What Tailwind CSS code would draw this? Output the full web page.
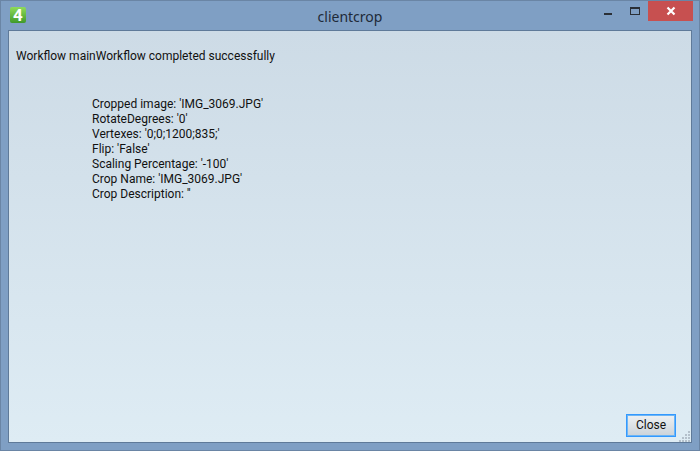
<!DOCTYPE html>
<html>
<head>
  <title>clientcrop</title>
  <script src="https://cdn.jsdelivr.net/npm/@tailwindcss/browser@4"></script>
</head>
<body class="w-[700px] h-[451px] overflow-hidden font-['Roboto',sans-serif]">
  <div class="w-full h-full flex flex-col bg-[#7f9fc4] border border-[#6a85a5]">
    <!-- title bar -->
    <div class="h-[29px] flex shrink-0 relative">
      <div class="w-[16px] h-[16px] ml-[9px] mt-[6px] rounded-[2px] bg-gradient-to-b from-[#8fdc5a] to-[#3f9a2a] flex items-center justify-center">
        <span class="text-white text-[17px] leading-none font-bold">4</span>
      </div>
      <div class="absolute inset-x-0 top-[6px] text-center font-['Noto_Sans',sans-serif] text-[14px] leading-[20px] text-[#1e2a38]">clientcrop</div>
      <div class="ml-auto flex items-start mr-[6px]">
        <div class="w-[27px] h-[20px] flex items-center justify-center">
          <div class="w-[8px] h-[2px] mt-[6px] bg-[#2a2f36]"></div>
        </div>
        <div class="w-[27px] h-[20px] flex items-center justify-center">
          <div class="w-[10px] h-[8px] border border-t-2 border-[#2a2f36]"></div>
        </div>
        <div class="w-[45px] h-[20px] bg-[#c75050] flex items-center justify-center">
          <svg width="10" height="10" viewBox="0 0 10 10"><path d="M1.5 1.5 L8.5 8.5 M8.5 1.5 L1.5 8.5" stroke="#fff" stroke-width="2.2"/></svg>
        </div>
      </div>
    </div>
    <!-- dialog body -->
    <div class="mx-[7px] mb-[7px] flex-1 relative flex flex-col border border-[#5f7a99] bg-gradient-to-b from-[#cddbe6] to-[#deecf4] text-[12px] leading-[15px] text-[#111]">
      <p class="ml-[7px] mt-[18px]">Workflow mainWorkflow completed successfully</p>
      <div class="ml-[83px] mt-[33px]">
        <p>Cropped image: 'IMG_3069.JPG'</p>
        <p>RotateDegrees: '0'</p>
        <p>Vertexes: '0;0;1200;835;'</p>
        <p>Flip: 'False'</p>
        <p>Scaling Percentage: '-100'</p>
        <p>Crop Name: 'IMG_3069.JPG'</p>
        <p>Crop Description: ''</p>
      </div>
      <div class="mt-auto mb-[5px] mr-[15px] flex justify-end">
        <button class="w-[50px] h-[23px] border border-[#3399ff] shadow-[inset_0_0_0_1px_#6db5f5] bg-gradient-to-b from-[#eef1f3] to-[#ccd3d9] text-[12px] text-[#111]">Close</button>
      </div>
      <svg class="absolute right-0 bottom-0" width="12" height="12" viewBox="0 0 12 12" fill="#b4c0cb">
        <rect x="9" y="1" width="2" height="2"/><rect x="6" y="4" width="2" height="2"/><rect x="9" y="4" width="2" height="2"/>
        <rect x="3" y="7" width="2" height="2"/><rect x="6" y="7" width="2" height="2"/><rect x="9" y="7" width="2" height="2"/>
        <rect x="0" y="10" width="2" height="2"/><rect x="3" y="10" width="2" height="2"/><rect x="6" y="10" width="2" height="2"/><rect x="9" y="10" width="2" height="2"/>
      </svg>
    </div>
  </div>
</body>
</html>
